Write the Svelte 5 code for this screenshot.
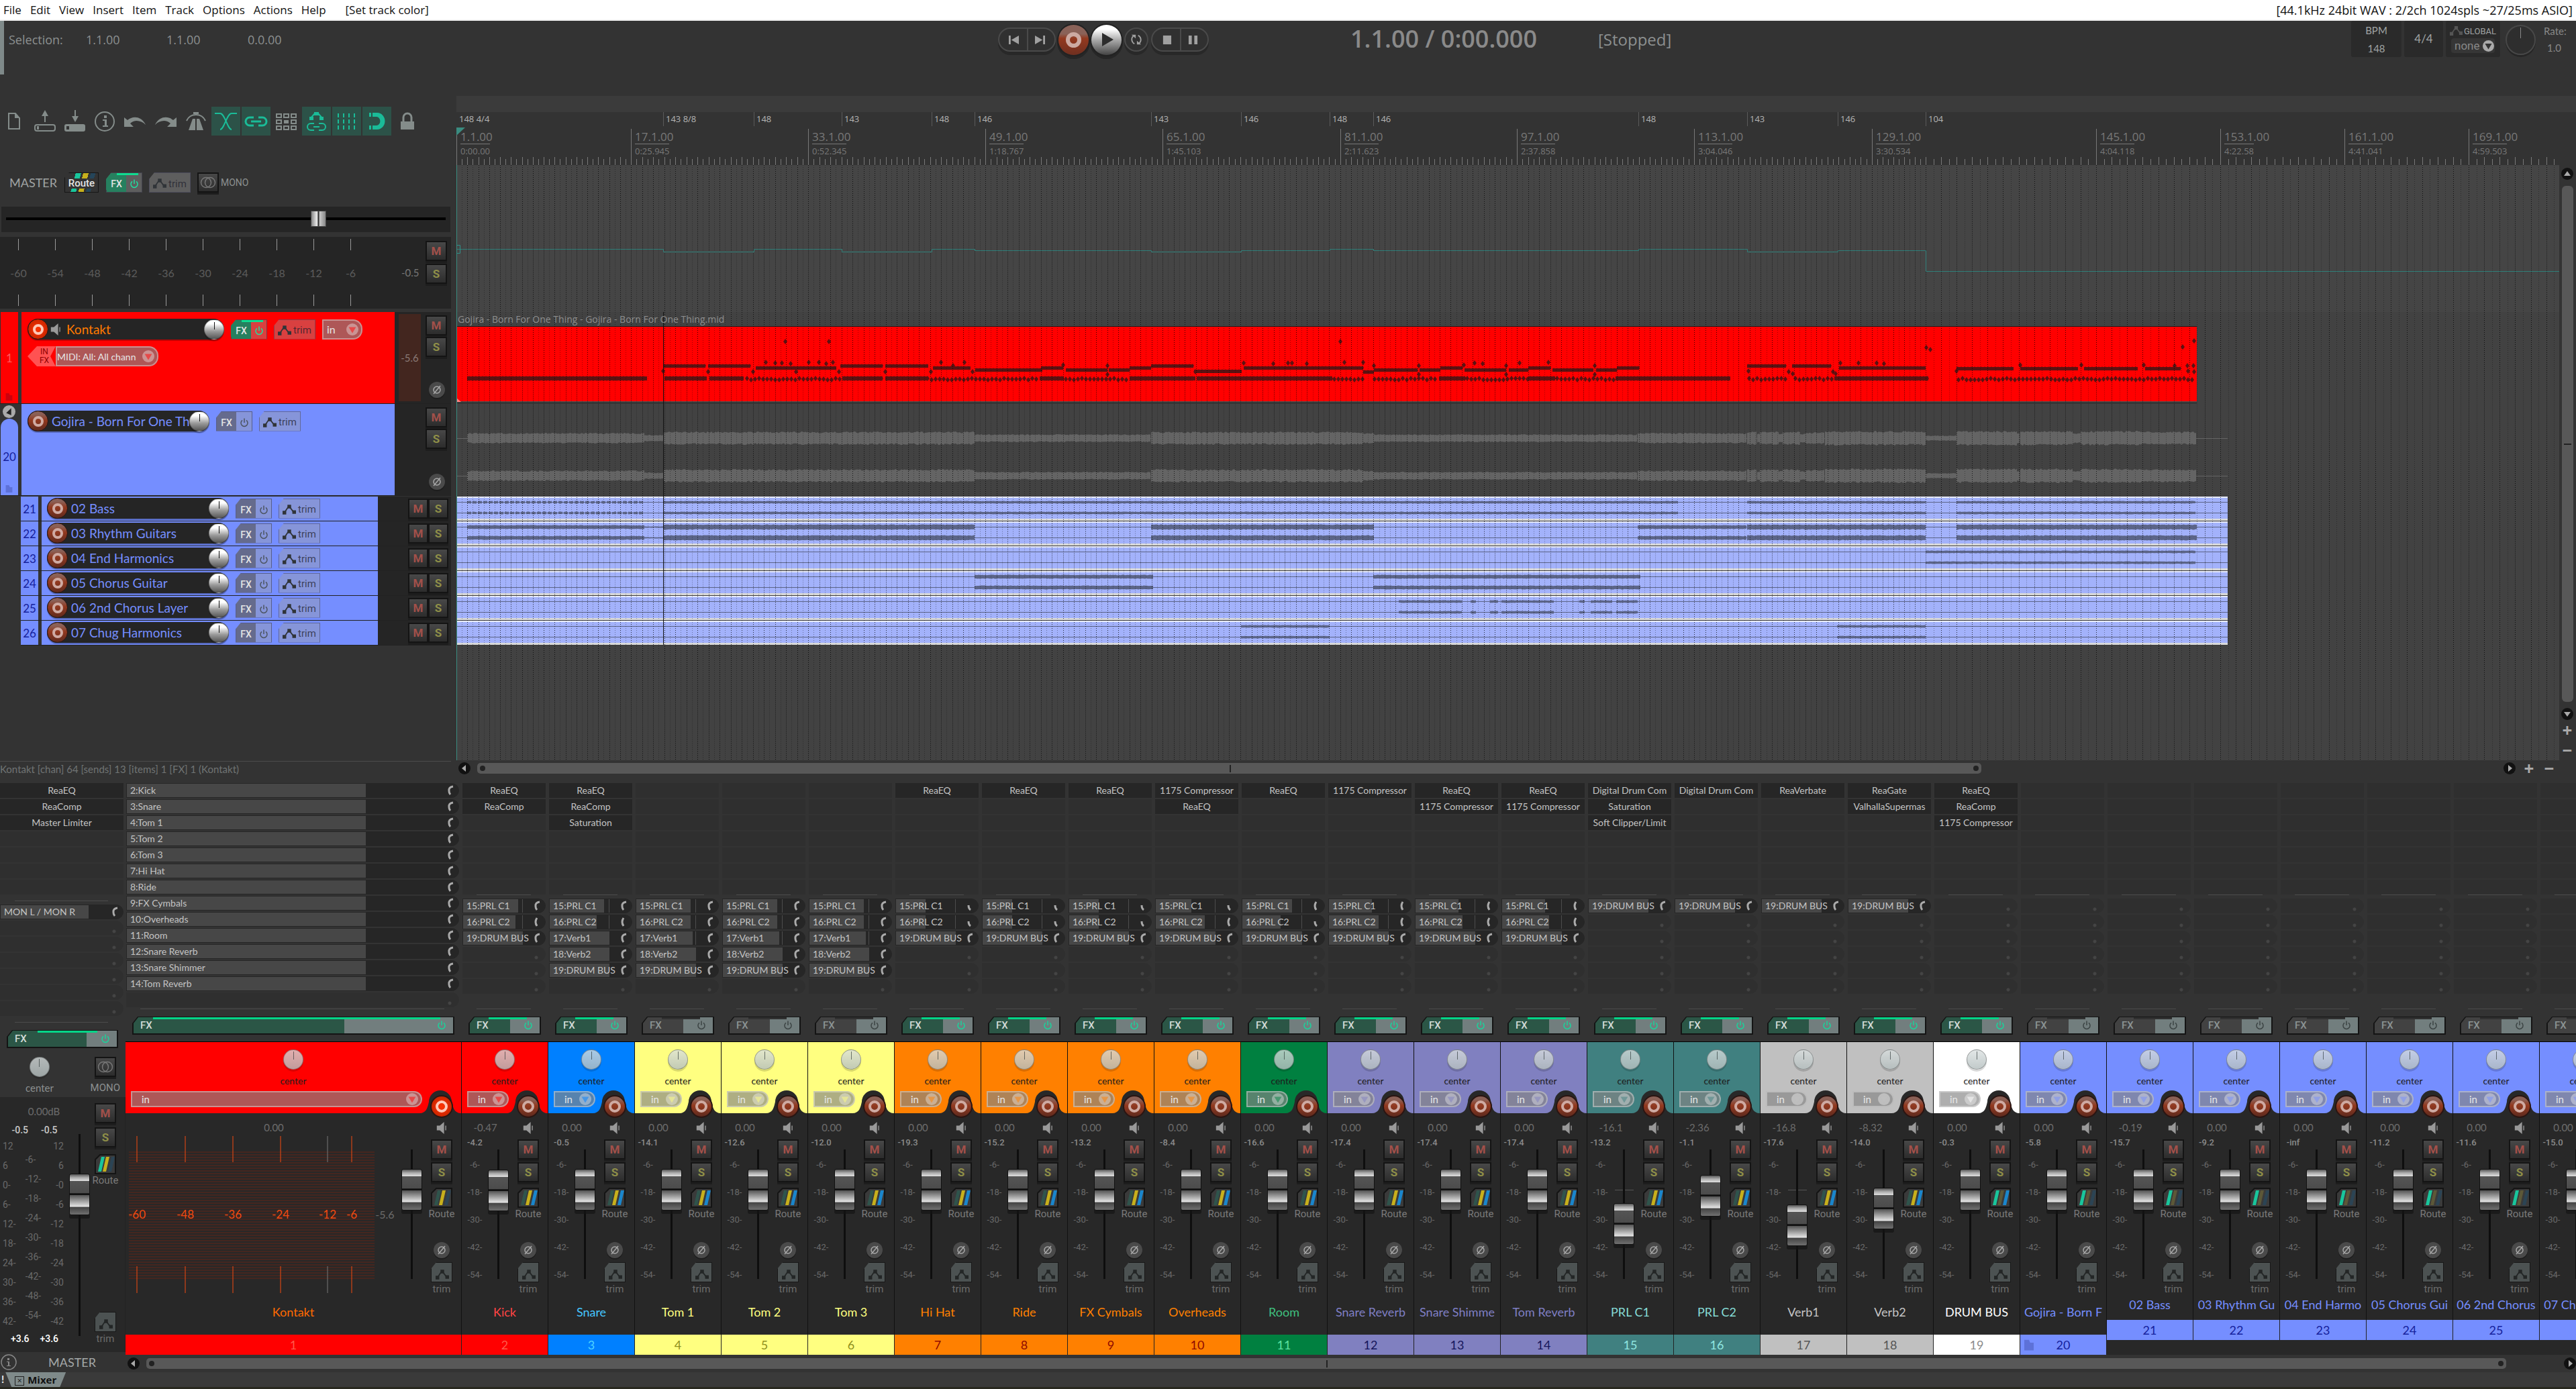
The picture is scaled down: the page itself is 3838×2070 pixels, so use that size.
<script>
	const menus = ['File', 'Edit', 'View', 'Insert', 'Item', 'Track', 'Options', 'Actions', 'Help'];

	// timeline is measured in project pixels, 3133 wide
	const TW = 3133;
	const TH = 887;

	const bars = [
		[1, 0, '1.1.00', '0:00.00'],
		[17, 260, '17.1.00', '0:25.945'],
		[33, 524, '33.1.00', '0:52.345'],
		[49, 788, '49.1.00', '1:18.767'],
		[65, 1052, '65.1.00', '1:45.103'],
		[81, 1317, '81.1.00', '2:11.623'],
		[97, 1580, '97.1.00', '2:37.858'],
		[113, 1844, '113.1.00', '3:04.046'],
		[129, 2109, '129.1.00', '3:30.534'],
		[134, 2189, '', ''],
		[145, 2443, '145.1.00', '4:04.118'],
		[153, 2628, '153.1.00', '4:22.58'],
		[161, 2813, '161.1.00', '4:41.041'],
		[169, 2998, '169.1.00', '4:59.503'],
		[177, 3183, '', '']
	];

	const tempos = [
		[0, '148 4/4', 148], [308, '143 8/8', 143], [443, '148', 148], [574, '143', 143],
		[708, '148', 148], [772, '146', 146], [1035, '143', 143], [1169, '146', 146],
		[1301, '148', 148], [1366, '146', 146], [1761, '148', 148], [1923, '143', 143],
		[2058, '146', 146], [2189, '104', 104]
	];

	function makeTicks() {
		const out = [];
		for (let i = 0; i < bars.length - 1; i++) {
			const [b0, x0] = bars[i];
			const [b1, x1] = bars[i + 1];
			const n = (b1 - b0) * 2;
			for (let k = 0; k < n; k++) {
				out.push({ x: Math.round(x0 + ((x1 - x0) * k) / n) + 0.5, whole: k % 2 === 0 });
			}
		}
		return out.filter((t) => t.x < TW);
	}
	const ticks = makeTicks();
	const path = (list, y0, y1) => list.map((t) => `M${t.x} ${y0}V${y1}`).join('');
	const wholeTicks = ticks.filter((t) => t.whole);
	const halfTicks = ticks.filter((t) => !t.whole);

	const tempoY = (bpm) => Math.round(125 + (148 - bpm) * 0.75) + 0.5;
	const tempoLine =
		tempos.map(([x, , bpm], i) => `${i ? 'H' + (x + 0.5) + 'V' : 'M0 '}${tempoY(bpm)}`).join('') + 'H' + TW;

	let seed = 7;
	function rnd() {
		seed = (seed * 16807) % 2147483647;
		return seed / 2147483647;
	}

	const diamond = (x, y, w, h) => `M${x - w} ${y}l${w} ${-h}l${w} ${h}l${-w} ${h}z`;

	const upper = [
		[308, 371, 299], [375, 438, 299], [446, 566, 302], [572, 635, 299], [639, 703, 299],
		[710, 766, 302], [773, 873, 305], [871, 904, 302], [908, 970, 305], [972, 1003, 305],
		[1003, 1035, 302], [1035, 1098, 299], [1099, 1170, 307], [1173, 1351, 302], [1351, 1367, 308],
		[1367, 1432, 305], [1435, 1466, 305], [1466, 1499, 302], [1502, 1564, 305], [1568, 1597, 305],
		[1597, 1630, 302], [1633, 1694, 305], [1698, 1729, 305], [1729, 1762, 302], [1923, 1981, 299],
		[1990, 2048, 299], [2060, 2189, 302], [2235, 2320, 303], [2330, 2416, 303], [2425, 2505, 303],
		[2516, 2569, 303]
	];
	const lower = [
		[16, 284, 1], [310, 373, 1], [377, 428, 1], [430, 574, 0], [575, 635, 1], [639, 703, 1],
		[705, 869, 0], [869, 905, 1], [905, 1003, 0], [1003, 1101, 1], [1103, 1170, 1], [1170, 1305, 1],
		[1305, 1351, 0], [1365, 1464, 0], [1464, 1503, 1], [1503, 1597, 0], [1597, 1637, 1],
		[1637, 1727, 0], [1727, 1898, 1], [1923, 1981, 0], [1992, 2050, 0], [2053, 2193, 1], [2235, 2592, 0]
	];
	const dots = [
		[490, 263], [555, 263], [442, 308], [461, 294], [475, 295], [485, 295], [498, 296], [525, 294],
		[540, 294], [561, 294], [551, 296], [506, 308], [375, 308], [308, 307], [570, 308], [639, 308],
		[707, 308], [722, 294], [740, 299], [757, 294], [769, 308], [904, 298], [970, 299], [970, 312],
		[1101, 308], [1173, 295], [1217, 296], [1239, 295], [1245, 295], [1267, 296], [1317, 263],
		[1323, 294], [1351, 294], [1367, 299], [1434, 299], [1434, 312], [1501, 298], [1517, 295],
		[1529, 296], [1564, 299], [1564, 312], [1584, 295], [1627, 294], [1696, 299], [1696, 312],
		[1925, 307], [1985, 308], [1991, 311], [2051, 308], [2055, 311], [2062, 295], [2089, 295],
		[2116, 295], [2127, 296], [2190, 272], [2196, 275], [2235, 307], [2330, 298], [2421, 298],
		[2514, 298], [2560, 299], [2572, 271], [2589, 262], [2579, 299], [2588, 299], [2580, 307], [2589, 308]
	];

	function midiPath() {
		let d = '';
		for (const [a, b, y] of upper) {
			d += `M${a} ${y - 2}H${b}v5H${a}z`;
			for (let x = a + 2; x < b; x += 5) d += diamond(x, y, 2, 3);
		}
		for (const [a, b, dense] of lower) {
			if (dense) d += `M${a} 315H${b}v6H${a}z`;
			for (let x = a + 3; x < b; x += dense ? 5 : 6) {
				d += diamond(x, dense ? 318 : 318 + Math.round(rnd() * 2), 3, 4);
			}
		}
		for (const [x, y] of dots) d += diamond(x, y, 3, 4);
		return d;
	}
	const midi = midiPath();

	// [from, to, half height]
	function wave(segs, cy, step = 2) {
		let d = '';
		for (const [a, b, amp] of segs) {
			let top = `M${a} ${cy}`;
			let bottom = '';
			for (let x = a; x <= b; x += step) {
				const u = amp - rnd() * amp * 0.25;
				const l = amp - rnd() * amp * 0.25;
				top += `L${x} ${(cy - u).toFixed(1)}`;
				bottom = `L${x} ${(cy + l).toFixed(1)}` + bottom;
			}
			d += top + bottom + 'Z';
		}
		return d;
	}
	const mixSegs = [
		[16, 280, 8], [280, 308, 5], [308, 772, 10], [772, 1035, 6], [1035, 1351, 10], [1351, 1367, 8],
		[1367, 1760, 6], [1760, 1923, 8], [1923, 1938, 10], [1938, 1942, 7], [1942, 1970, 10], [1970, 1976, 7],
		[1976, 2002, 10], [2002, 2010, 7], [2010, 2039, 9], [2039, 2189, 11], [2189, 2235, 4], [2235, 2325, 11],
		[2325, 2330, 8], [2330, 2408, 11], [2408, 2420, 8], [2420, 2510, 11], [2510, 2593, 10]
	];
	const mixL = wave(mixSegs, 407);
	const mixR = wave(mixSegs, 463);

	const bassIntro = Array.from({ length: 33 }, (_, i) => [16 + i * 8, 22 + i * 8, 2]);
	const stems = [
		{ no: 21, name: '02 Bass', segs: [...bassIntro, [308, 1821, 2], [1923, 2189, 2], [2235, 2591, 2]] },
		{ no: 22, name: '03 Rhythm Guitars', segs: [[16, 280, 3], [280, 308, 1], [308, 772, 4], [1035, 1367, 4], [1760, 1923, 3], [1923, 2189, 4], [2235, 2593, 4]] },
		{ no: 23, name: '04 End Harmonics', segs: [[2189, 2591, 2]] },
		{ no: 24, name: '05 Chorus Guitar', segs: [[772, 1039, 3], [1366, 1764, 3]] },
		{ no: 25, name: '06 2nd Chorus Layer', segs: [[1404, 1498, 2], [1511, 1520, 2], [1540, 1552, 2], [1557, 1636, 2], [1673, 1682, 2], [1690, 1723, 2], [1728, 1760, 2]] },
		{ no: 26, name: '07 Chug Harmonics', segs: [[1169, 1302, 2], [2057, 2190, 2]] }
	].map((s, i) => {
		const y = 494 + i * 37;
		return { ...s, y, d: wave(s.segs, y + 8.5) + wave(s.segs, y + 24.5) };
	});

	const tools = ['new', 'open', 'save', 'info', 'undo', 'redo', 'metronome', 'crossfade', 'link', 'group', 'envlink', 'grid', 'snap', 'lock'];
	const activeTools = ['crossfade', 'link', 'envlink', 'grid', 'snap'];

	const s = (label, fill = 89) => ({ label, fill });
	const drum = () => s('19:DRUM BUS');
	const tomSends = () => [s('15:PRL C1', 81), s('16:PRL C2', 81), s('17:Verb1', 84), s('18:Verb2'), drum()];
	const pair = (a, b) => [s('15:PRL C1', a), s('16:PRL C2', b), drum()];
	const C = {
		red: ['#ff0000', '#ff4444', '#ff5a4a'],
		blue: ['#0080ff', '#45c6ff', '#4fd2ff'],
		yellow: ['#ffff80', '#ffff80', '#8f8f1c'],
		orange: ['#ff8000', '#ff8000', '#8f0a00'],
		green: ['#008040', '#3fc07f', '#5fe0a0'],
		violet: ['#8080c0', '#7f7fc4', '#16165c'],
		teal: ['#408080', '#86dcd6', '#90e6e0'],
		grey: ['#c0c0c0', '#c4c4c4', '#555555'],
		white: ['#ffffff', '#ffffff', '#8c8c8c'],
		peri: ['#758eff', '#758eff', '#15229c']
	};
	const strips = [
		{ no: 2, name: 'Kick', c: C.red, fx: ['ReaEQ', 'ReaComp'], sends: pair(82, 78), vol: '-0.47', peak: '-4.2', top: 30 },
		{ no: 3, name: 'Snare', c: C.blue, fx: ['ReaEQ', 'ReaComp', 'Saturation'], sends: [s('15:PRL C1', 81), s('16:PRL C2', 70), s('17:Verb1'), s('18:Verb2'), drum()], peak: '-0.5' },
		{ no: 4, name: 'Tom 1', c: C.yellow, sends: tomSends(), peak: '-14.1' },
		{ no: 5, name: 'Tom 2', c: C.yellow, sends: tomSends(), peak: '-12.6' },
		{ no: 6, name: 'Tom 3', c: C.yellow, sends: tomSends(), peak: '-12.0' },
		{ no: 7, name: 'Hi Hat', c: C.orange, fx: ['ReaEQ'], sends: pair(44, 44), peak: '-19.3' },
		{ no: 8, name: 'Ride', c: C.orange, fx: ['ReaEQ'], sends: pair(44, 44), peak: '-15.2' },
		{ no: 9, name: 'FX Cymbals', c: C.orange, fx: ['ReaEQ'], sends: pair(44, 44), peak: '-13.2' },
		{ no: 10, name: 'Overheads', c: C.orange, fx: ['1175 Compressor', 'ReaEQ'], sends: pair(53, 73), peak: '-8.4' },
		{ no: 11, name: 'Room', c: C.green, fx: ['ReaEQ'], sends: pair(74, 57), peak: '-16.6' },
		{ no: 12, name: 'Snare Reverb', c: C.violet, fx: ['1175 Compressor'], sends: pair(64, 74), peak: '-17.4' },
		{ no: 13, name: 'Snare Shimme', c: C.violet, fx: ['ReaEQ', '1175 Compressor'], sends: pair(64, 70), peak: '-17.4' },
		{ no: 14, name: 'Tom Reverb', c: C.violet, fx: ['ReaEQ', '1175 Compressor'], sends: pair(64, 70), peak: '-17.4' },
		{ no: 15, name: 'PRL C1', c: C.teal, fx: ['Digital Drum Com', 'Saturation', 'Soft Clipper/Limit'], sends: [drum()], vol: '-16.1', peak: '-13.2', top: 80 },
		{ no: 16, name: 'PRL C2', c: C.teal, fx: ['Digital Drum Com'], sends: [drum()], vol: '-2.36', peak: '-1.1', top: 38 },
		{ no: 17, name: 'Verb1', c: C.grey, fx: ['ReaVerbate'], sends: [drum()], vol: '-16.8', peak: '-17.6', top: 82 },
		{ no: 18, name: 'Verb2', c: C.grey, fx: ['ReaGate', 'ValhallaSupermas'], sends: [drum()], vol: '-8.32', peak: '-14.0', top: 57 },
		{ no: 19, name: 'DRUM BUS', c: C.white, fx: ['ReaEQ', 'ReaComp', '1175 Compressor'], peak: '-0.3', route: [1, 0, 1] },
		{ no: 20, name: 'Gojira - Born F', c: C.peri, peak: '-5.8', route: [1, 0, 0], folder: true },
		{ no: 21, name: '02 Bass', c: C.peri, vol: '-0.19', peak: '-15.7', route: [1, 0, 0], child: true },
		{ no: 22, name: '03 Rhythm Gu', c: C.peri, peak: '-9.2', route: [1, 0, 0], child: true },
		{ no: 23, name: '04 End Harmo', c: C.peri, peak: '-inf', route: [1, 0, 0], child: true },
		{ no: 24, name: '05 Chorus Gui', c: C.peri, peak: '-11.2', route: [1, 0, 0], child: true },
		{ no: 25, name: '06 2nd Chorus', c: C.peri, peak: '-11.6', route: [1, 0, 0], child: true },
		{ no: 26, name: '07 Chug Harm', c: C.peri, peak: '-15.0', route: [1, 0, 0], child: true }
	];
	const kontakt = {
		no: 1, name: 'Kontakt', c: ['#ff0000', '#ff6a00', '#ff5a4a'], route: [0, 1, 0], wide: true, fx: [' '],
		sends: ['2:Kick', '3:Snare', '4:Tom 1', '5:Tom 2', '6:Tom 3', '7:Hi Hat', '8:Ride', '9:FX Cymbals', '10:Overheads', '11:Room', '12:Snare Reverb', '13:Snare Shimmer', '14:Tom Reverb'].map((l) => s(l, 356))
	};
	const wideScale = [[17, '-60'], [89, '-48'], [160, '-36'], [231, '-24'], [301, '-12'], [337, '-6']];
	const masterScale = ['12', '6', '0', '6', '12', '18', '24', '30', '36', '42'];
	const pad = (list, n) => [...(list ?? []), ...Array(Math.max(0, n - (list ?? []).length)).fill(null)];
</script>

{#snippet envIcon()}
	<svg class="env" viewBox="0 0 22 16"><path d="M3 13L9 4H12L18 12" /><path class="node" d="M0 10h6v6H0zM8 0h6v6H8zM16 9h6v6h-6z" /></svg>
{/snippet}

{#snippet power()}
	<svg class="power" viewBox="0 0 14 14"><path d="M4 3.4A5 5 0 1 0 10 3.4M7 0.5V7" /></svg>
{/snippet}

{#snippet rec(armed)}
	<button class="rec" class:armed aria-label="Record arm"><i></i></button>
{/snippet}

{#snippet ms(cls, text)}
	<button class="sq {cls}" aria-label={cls}>{text}</button>
{/snippet}

{#snippet phase()}
	<button class="phase" aria-label="Phase">
		<svg viewBox="0 0 24 24"><circle cx="12" cy="12" r="5" /><path d="M7 18L17 6" /></svg>
	</button>
{/snippet}

{#snippet speaker()}
	<svg class="speaker" viewBox="0 0 16 20"><path d="M0 6h5l7-6v20l-7-6H0z" /><path d="M14 6h1.500v8H14z" /></svg>
{/snippet}

{#snippet mono()}
	<button class="sq" aria-label="Mono">
		<svg class="rings" viewBox="0 0 24 18"><circle cx="9" cy="9" r="7.500" /><circle cx="15" cy="9" r="7.500" /></svg>
	</button>
{/snippet}

{#snippet tcpFx(on)}
	<button class="tfx" class:on aria-label="FX"><b>FX</b><span>{@render power()}</span></button>
{/snippet}

{#snippet tcpTrim()}
	<button class="ttrim">{@render envIcon()}trim</button>
{/snippet}

{#snippet dropArrow()}
	<svg class="drop" viewBox="0 0 20 20"><circle cx="10" cy="10" r="10" /><path d="M4 6h12L10 16z" /></svg>
{/snippet}

{#snippet routeIcon(on)}
	<svg class="route" viewBox="0 0 32 30">
		<path class="edge" d="M8 1H31V29H1V8z" />
		<path d="M10 4h5l-5 22H5z" fill={on[0] ? '#19c69c' : '#2f544c'} />
		<path d="M17 4h5l-5 22h-5z" fill={on[1] ? '#c7b01c' : '#5c5838'} />
		<path d="M25 4h5l-5 22h-5z" fill={on[2] ? '#1a86cc' : '#2b4454'} />
	</svg>
{/snippet}

{#snippet fxButton(on)}
	<button class="fxbtn" class:on><span><b>FX</b><em>{@render power()}</em></span></button>
{/snippet}

{#snippet sendRow(send)}
	{#if send}
		<div class="send">
			<div class="fill" style="width: {send.fill}px"></div>
			{#if send.fill < 89}<u></u>{/if}
			<span>{send.label}</span>
			<svg viewBox="0 0 12 16"><path d={send.fill < 60 ? 'M4 7Q4 12 7 14' : send.fill < 80 ? 'M6 2Q2 8 6 14' : 'M10 2Q3 3 4 9Q4 12 6 14'} /></svg>
		</div>
	{:else}
		<div class="send none"></div>
	{/if}
{/snippet}

{#snippet fader(value, max, label)}
	<input class="fader" type="range" min="0" {max} {value} aria-label={label} />
{/snippet}

{#snippet strip(t)}
	<section class="strip" class:wide={t.wide} class:child={t.child} style="--c: {t.c[0]}; --n: {t.c[1]}; --d: {t.c[2]}">
		<div class="inserts">
			{#if t.wide}
				{#each pad(t.sends, 14) as send}{@render sendRow(send)}{/each}
			{:else}
				{#each pad(t.fx, 7) as fx}<div class="insert" class:used={fx}>{fx ?? ''}</div>{/each}
				<hr class="first" />
				{#each pad(t.sends, 6) as send}{@render sendRow(send)}{/each}
			{/if}
		</div>
		<hr />
		{@render fxButton(!!t.fx)}
		<div class="head">
			<button class="knob" aria-label="Pan"></button>
			<div class="pan">center</div>
			<label class="in"><select aria-label="Input"><option>in</option></select>{@render dropArrow()}</label>
			<svg class="notch" viewBox="0 0 62 36"><path d="M0 36C10 36 12 28 14 19A17 17 0 0 1 48 19C50 28 52 36 62 36z" /></svg>
			{@render rec(t.no === 1)}
		</div>
		<div class="body">
			<div class="left">
				<div class="vol">{t.vol ?? '0.00'}</div>
				<div class="lanes">
					{#if t.wide}
						<div class="hmeter">
							<svg viewBox="0 0 411 234" preserveAspectRatio="none">
								{#each Array(48) as _, i}<path d="M5 {24 + i * 4}H371" stroke="#45261f" stroke-width="2" />{/each}
								{#each wideScale as [x]}<path d="M{x} 0V39M{x} 194V234" stroke={x === 301 ? '#777' : '#f24a10'} />{/each}
							</svg>
							{#each wideScale as [x, label]}<span style="left: {(x / 411) * 100}%">{label}</span>{/each}
							<span class="clip">-5.6</span>
						</div>
					{:else}
						<div class="scale">
							<b>{t.peak}</b>
							{#each ['-6-', '-18-', '-30-', '-42-', '-54-'] as l}<span>{l}</span>{/each}
						</div>
					{/if}
					{@render fader(131 - (t.top ?? 29), 131, t.name + ' volume')}
				</div>
			</div>
			<div class="right">
				{@render speaker()}
				{@render ms('mute', 'M')}
				{@render ms('solo', 'S')}
				<button class="routebtn">{@render routeIcon(t.route ?? [0, 1, 1])}Route</button>
				{@render phase()}
				<button class="trimbtn"><i>{@render envIcon()}</i>trim</button>
			</div>
		</div>
		<div class="name"><span>{t.name}</span></div>
		<div class="num">
			{#if t.folder}<svg viewBox="0 0 16 18"><path d="M0 0h8l2 5h6v13H0z" /></svg>{/if}
			{t.no}
		</div>
	</section>
{/snippet}

{#snippet side(big)}
	<div class="side" class:big>
		<div class="sqs">{@render ms('mute', 'M')}{@render ms('solo', 'S')}</div>
		{#if big}{@render phase()}{/if}
	</div>
{/snippet}

{#snippet hscroll(mark)}
	<button class="arrow" aria-label="Scroll left"><svg viewBox="0 0 18 18"><path d="M11 4v10L5 9z" /></svg></button>
	<div class="bar"><i></i><u style="left: {mark}%"></u><i></i></div>
{/snippet}

<nav class="menubar">
	{#each menus as m}<button>{m}</button>{/each}
	<button class="last">[Set track color]</button>
	<span>[44.1kHz 24bit WAV : 2/2ch 1024spls ~27/25ms ASIO]</span>
</nav>

<header class="transport">
	<div class="selection"><span>Selection:</span><span>1.1.00</span><span>1.1.00</span><span>0.0.00</span></div>
	<div class="buttons">
		<div class="pill">
			<button aria-label="Start"><svg viewBox="0 0 18 16"><path d="M1 1h3v14H1zM17 1v14L5 8z" /></svg></button>
			<button aria-label="End"><svg viewBox="0 0 18 16"><path d="M14 1h3v14h-3zM1 1v14L13 8z" /></svg></button>
		</div>
		<button class="round record" aria-label="Record"><i></i></button>
		<button class="round play" aria-label="Play"><svg viewBox="0 0 20 20"><path d="M3 0L20 10 3 20z" /></svg></button>
		<button class="round repeat" aria-label="Repeat">
			<svg viewBox="0 0 20 20"><path d="M7 17A8 8 0 0 1 5 4M13 3A8 8 0 0 1 15 16" /><path class="f" d="M2 2h7v6zM18 18h-7v-6z" /></svg>
		</button>
		<div class="pill">
			<button aria-label="Stop"><svg viewBox="0 0 18 16"><path d="M3 1h13v14H3z" /></svg></button>
			<button aria-label="Pause"><svg viewBox="0 0 18 16"><path d="M2 1h5v14H2zM11 1h5v14h-5z" /></svg></button>
		</div>
	</div>
	<div class="time">1.1.00 / 0:00.000</div>
	<div class="state">[Stopped]</div>
	<div class="status">
		<div class="cell bpm"><span>BPM</span><span>148</span></div>
		<div class="cell sig">4/4</div>
		<div class="cell global">
			<span>{@render envIcon()}GLOBAL</span>
			<label><select aria-label="Global automation"><option>none</option></select>{@render dropArrow()}</label>
		</div>
		<button class="rateknob" aria-label="Rate"></button>
		<div class="rate"><span>Rate:</span><span>1.0</span></div>
	</div>
</header>

<main class="workspace">
	<div class="tcp">
		<div class="toolbar">
			{#each tools as tool}
				<button class:active={activeTools.includes(tool)} aria-label={tool}>
					<svg viewBox="0 0 43 43">
						{#if tool === 'new'}
							<path d="M13 10h10l6 7v16H13z" /><path class="f" d="M22 9l8 8h-8z" />
						{:else if tool === 'open'}
							<rect x="7" y="27" width="30" height="9" rx="3" /><path d="M22 23V10" /><path class="f" d="M17 14l5-9 5 9zM10 29h3v5h-3z" />
						{:else if tool === 'save'}
							<rect class="f" x="6" y="26" width="31" height="11" rx="3" /><path d="M22 5V18" /><path class="f" d="M17 14l5 9 5-9z" /><path class="hole" d="M9 29h4v5H9z" />
						{:else if tool === 'info'}
							<circle cx="21" cy="22" r="14" /><path class="f" d="M20 13h4v4h-4zM18 19h6v9h2v2h-8v-2h3v-7h-3z" />
						{:else if tool === 'undo'}
							<path class="f" d="M5 16v14h14l-5-5C20 19 30 20 37 27 30 13 17 14 10 20z" />
						{:else if tool === 'redo'}
							<path class="f" d="M38 16v14H24l5-5C23 19 13 20 6 27 13 13 26 14 33 20z" />
						{:else if tool === 'metronome'}
							<path class="f" d="M17 18h10l6 17H11zM18 8h8v3h-8z" /><path d="M8 21Q12 12 22 12Q32 12 36 21" /><path class="cut" d="M22 18V35" />
						{:else if tool === 'crossfade'}
							<path d="M5 10H13C20 10 24 34 30 34M38 10H30C23 10 19 34 13 34" />
						{:else if tool === 'link'}
							<path class="m" d="M18 16H12A6 6 0 0 0 12 28H18M25 16H31A6 6 0 0 1 31 28H25M14 22H29" />
						{:else if tool === 'group'}
							{#each [0, 1, 2] as r}{#each [0, 1, 2] as c}
								<rect class:f={r === 1 && c === 1} x={7 + c * 11} y={11 + r * 9} width="7" height="5" />
							{/each}{/each}
						{:else if tool === 'envlink'}
							<path d="M12 18L19 10H24L31 18" /><path class="f" d="M11 15h6v5h-6zM18 8h7v5h-7zM26 15h6v5h-6z" /><path d="M18 25H13A5 5 0 0 0 13 35H18M25 25H30A5 5 0 0 1 30 35H25M17 30H26" />
						{:else if tool === 'grid'}
							<path class="dash" d="M9 10V34M17 10V34M25 10V34M33 10V34" />
						{:else if tool === 'snap'}
							<path class="f" d="M15 9H22A11 12 0 0 1 22 34H15V28H21A5 6 0 0 0 21 15H15z" /><path class="f" d="M10 9h3v6h-3zM10 28h3v6h-3z" />
						{:else}
							<path class="f" d="M12 22h20v12H12z" /><path class="m" d="M16 22V16A6 6 0 0 1 28 16V22" />
						{/if}
					</svg>
				</button>
			{/each}
		</div>

		<div class="master-row">
			<span class="title">MASTER</span>
			<button class="rt">Route</button>
			{@render tcpFx(true)}
			{@render tcpTrim()}
			{@render mono()}<span class="mono">MONO</span>
		</div>
		<div class="mfader"><input type="range" min="0" max="631" value="453" aria-label="Master volume" /></div>
		<div class="mmeter">
			{#each ['-60', '-54', '-48', '-42', '-36', '-30', '-24', '-18', '-12', '-6'] as l}<div>{l}</div>{/each}
			<span>-0.5</span>
			<div class="sqs">{@render ms('mute', 'M')}{@render ms('solo', 'S')}</div>
		</div>

		<div class="track big" style="--c: #ff0000">
			<div class="no" style="color: #ff5a5a">1<svg viewBox="0 0 16 18"><path d="M0 0h8l2 5h6v13H0z" /></svg></div>
			<div class="panel">
				<div class="ctl">
					<div class="label wide">{@render rec(true)}{@render speaker()}<span style="color: #ff7a00">Kontakt</span><button class="knob metal" aria-label="Pan"></button></div>
					{@render tcpFx(true)}{@render tcpTrim()}
					<label class="in"><select aria-label="Input"><option>in</option></select>{@render dropArrow()}</label>
				</div>
				<div class="ctl midi">
					<button class="infx">IN<br />FX</button>
					<label class="in"><select aria-label="MIDI input"><option>MIDI: All: All chann</option></select>{@render dropArrow()}</label>
				</div>
			</div>
			<div class="peak">-5.6</div>
			{@render side(true)}
		</div>
		<div class="track big folder" style="--c: #758eff">
			<div class="no"><button aria-label="Collapse"><svg viewBox="0 0 18 18"><path d="M12 4v10L5 11z" /></svg></button><span>20</span><svg viewBox="0 0 16 18"><path d="M0 0h8l2 5h6v13H0z" /></svg></div>
			<div class="panel">
				<div class="ctl">
					<div class="label">{@render rec(false)}<span>Gojira - Born For One Th</span><button class="knob metal" aria-label="Pan"></button></div>
					{@render tcpFx(false)}{@render tcpTrim()}
				</div>
			</div>
			<div class="peak off"></div>
			{@render side(true)}
		</div>
		<div class="children">
			{#each stems as t}
				<div class="track" style="--c: #758eff">
					<div class="no">{t.no}</div>
					<div class="panel">
						<div class="ctl">
							<div class="label">{@render rec(false)}<span>{t.name}</span><button class="knob metal" aria-label="Pan"></button></div>
							{@render tcpFx(false)}{@render tcpTrim()}
						</div>
					</div>
					{@render side(false)}
				</div>
			{/each}
		</div>
		<div class="note">Kontakt [chan] 64 [sends] 13 [items] 1 [FX] 1 (Kontakt)</div>
	</div>

	<div class="arrange">
		<div class="band"></div>
		<div class="ruler">
			<svg viewBox="0 0 3158 79" preserveAspectRatio="none">
				<path d={path(wholeTicks, 67, 79)} /><path d={path(halfTicks, 70, 79)} />
				{#each bars as [, x, label]}{#if label}<path d="M{x + 0.5} 25V79" />{/if}{/each}
				{#each tempos.slice(1) as [x]}<path class="dim" d="M{x + 0.5} 0V21" />{/each}
				<path class="start" d="M0 23H13L0 35z" />
			</svg>
			{#each tempos as [x, label]}<span class="tempo" style="left: {(x / 3158) * 100}%">{label}</span>{/each}
			{#each bars as [, x, label, time]}
				{#if label}<div class="mark" style="left: {(x / 3158) * 100}%">{label}<small>{time}</small></div>{/if}
			{/each}
		</div>
		<div class="view">
			<div class="canvas">
				<svg viewBox="0 0 {TW} {TH}" preserveAspectRatio="none">
					<rect y="219" width={TW} height="668" fill="#424242" />
					<rect y="240" width="2593" height="115" fill="#1e1e1e" />
					<rect y="241" width="2593" height="111" fill="#ff0000" />
					<rect y="352" width="2593" height="2" fill="#4a4a4a" />
					<path d={midi} fill="#5c1212" />
					<path d="M0 347l7 6H0z" fill="#ff8080" />
					<path d="M0 407.500H2639M0 463.500H2639" stroke="#646464" />
					<path d={mixL} fill="#646464" /><path d={mixR} fill="#646464" />
					{#each stems as t}
						<rect y={t.y} width="2639" height="37" fill="#3a3a3a" />
						<rect y={t.y} width="2639" height="2" fill="#e8ecff" />
						<rect y={t.y + 2} width="2639" height="31" fill="#a3b2fb" />
						<rect y={t.y + 33} width="2639" height="3" fill="#d9d9d9" />
						<path d="M0 {t.y + 8.5}H2639M0 {t.y + 24.5}H2639" stroke="#5b6487" />
						<path d={t.d} fill="#5b6487" />
					{/each}
					<path class="g1" d={path(wholeTicks, 0, TH)} />
					<path class="g2" d={path(halfTicks, 0, TH)} />
					<path d={tempoLine} fill="none" stroke="#2f7f79" />
					<path d="M308.500 219V715" stroke="#111" />
					<path d="M0.500 0V887" stroke="#3a8c80" />
					<path d="M0 119.500H5.500V131.500H0" fill="none" stroke="#2f8f88" />
				</svg>
				<span class="itemname">Gojira - Born For One Thing - Gojira - Born For One Thing.mid</span>
			</div>
			<div class="vscroll">
				<button class="arrow" aria-label="Scroll up"><svg viewBox="0 0 18 18"><path d="M4 12h10L9 5z" /></svg></button>
				<div class="bar"></div>
				<button class="arrow" aria-label="Scroll down"><svg viewBox="0 0 18 18"><path d="M4 6h10l-5 7z" /></svg></button>
				<button class="zoom">+</button>
				<button class="zoom">−</button>
			</div>
		</div>
		<div class="hscroll">
			{@render hscroll(50)}
			<div class="rest"></div>
			<button class="arrow" aria-label="Scroll right"><svg viewBox="0 0 18 18"><path d="M7 4v10l6-5z" /></svg></button>
			<button class="zoom">+</button>
			<button class="zoom">−</button>
		</div>
	</div>
</main>

<div class="mixer">
	<section class="master">
		<div class="inserts">
			{#each pad(['ReaEQ', 'ReaComp', 'Master Limiter'], 7) as fx}<div class="insert" class:used={fx}>{fx ?? ''}</div>{/each}
			<hr class="first" />
			{#each pad([s('MON L / MON R', 131)], 7) as send}{@render sendRow(send)}{/each}
		</div>
		<hr />
		{@render fxButton(true)}
		<div class="mhead">
			<div><button class="knob" aria-label="Master pan"></button><span>center</span></div>
			<div>{@render mono()}<span>MONO</span></div>
		</div>
		<div class="mbody">
			<div class="mleft">
				<div class="vol">0.00dB</div>
				<div class="peaks"><b>-0.5</b><b>-0.5</b></div>
				<div class="cols">
					<div>{#each masterScale as l, i}<span>{l}{i > 1 ? '-' : ''}</span>{/each}</div>
					<div class="mid">{#each [6, 12, 18, 24, 30, 36, 42, 48, 54] as l}<span>-{l}-</span>{/each}</div>
					<div class="end">{#each masterScale as l, i}<span>{i > 1 ? '-' : ''}{l}</span>{/each}</div>
				</div>
				<div class="peaks low"><b>+3.6</b><b>+3.6</b></div>
			</div>
			{@render fader(180, 239, 'Master volume')}
			<div class="right">
				{@render ms('mute', 'M')}
				{@render ms('solo', 'S')}
				<button class="routebtn">{@render routeIcon([1, 1, 0])}Route</button>
				<button class="trimbtn"><i>{@render envIcon()}</i>trim</button>
			</div>
		</div>
		<div class="mfoot">
			<svg viewBox="0 0 24 24"><circle cx="12" cy="12" r="11" /><path d="M10 6h3v3h-3zM9 11h4v6h2v1H9v-1h2v-5H9z" /></svg>
			<span>MASTER</span>
		</div>
	</section>
	<div class="strips">
		<div class="row">
			{@render strip(kontakt)}
			{#each strips as t}{@render strip(t)}{/each}
		</div>
		<div class="hscroll">
			{@render hscroll(50)}
			<div class="rest"></div>
			<button class="arrow" aria-label="Scroll right"><svg viewBox="0 0 18 18"><path d="M7 4v10l6-5z" /></svg></button>
		</div>
	</div>
</div>
<footer><b>!</b><button class="tab"><i>×</i>Mixer</button></footer>

<style>
	:global(body) {
		background: #333333;
		font-family: Lato, "Open Sans", sans-serif;
		font-size: 15px;
		color: #8c9090;
		overflow: hidden;
	}
	:global(#app) { overflow: hidden; }
	button, select {
		font: inherit;
		color: inherit;
		background: none;
		border: none;
		padding: 0;
		margin: 0;
	}
	svg { display: block; }
	* { box-sizing: border-box; }

	.menubar {
		display: flex;
		align-items: center;
		height: 31px;
		gap: 13px;
		padding: 0 5px;
		background: #fff;
		border-bottom: 2px solid #f0f0f0;
		color: #111;
		font: 17px "Open Sans", sans-serif;
	}
	.menubar .last { margin-left: 16px; }
	.menubar span { margin-left: auto; font-size: 18px; }

	.transport {
		display: grid;
		grid-template-columns: 1487px 525px 369px 1fr auto;
		height: 112px;
		font-family: "Open Sans", sans-serif;
		border-left: 6px solid #7f8a8a;
		border-image: linear-gradient(#7f8a8a 0 80px, #333 80px) 1;
	}
	.selection {
		display: grid;
		grid-template-columns: 115px 120px 121px auto;
		justify-content: start;
		padding: 16px 0 0 7px;
		font-size: 18px;
		line-height: 24px;
	}
	.buttons {
		display: flex;
		align-items: center;
		gap: 4px;
		height: 56px;
		margin-left: -6px;
	}
	.pill {
		display: flex;
		height: 36px;
		border: 2px solid #4a4a4a;
		border-radius: 18px;
		background: #303030;
		box-shadow: 0 5px 0 #282828;
	}
	.pill button { width: 41px; padding-left: 13px; }
	.pill button + button { border-left: 2px solid #4a4a4a; padding-left: 9px; }
	.pill svg { width: 17px; height: 15px; fill: #a0a0a0; }
	.round {
		display: flex;
		align-items: center;
		justify-content: center;
		width: 45px;
		height: 45px;
		border-radius: 50%;
		box-shadow: 0 0 0 2px #222, 0 4px 0 2px #262626;
	}
	.record { background: linear-gradient(#8a6258 0 30%, #93391f 45%, #6e2f20); }
	.record i { width: 23px; height: 23px; border: 6px solid #ccaaa2; border-radius: 50%; }
	.play { background: linear-gradient(#fff 15%, #aaa 50%, #444); }
	.play svg { width: 20px; height: 20px; fill: #2c2c2c; }
	.repeat { width: 36px; height: 36px; background: #303030; box-shadow: inset 0 0 0 2px #4a4a4a, 0 5px 0 #282828; }
	.repeat svg { width: 18px; height: 18px; fill: none; stroke: #a0a0a0; stroke-width: 2; }
	.repeat .f { fill: #a0a0a0; stroke: none; }
	.time { font-size: 36px; font-weight: 600; line-height: 54px; margin-left: -6px; white-space: nowrap; color: #8a8a8a; }
	.state { font-size: 24px; line-height: 56px; margin-left: -6px; }
	.status { display: flex; gap: 4px; height: 54px; font: 15px Lato, sans-serif; color: #a0a4a4; }
	.cell { background: #2a2a2a; border-radius: 3px; text-align: center; }
	.bpm { width: 75px; display: flex; flex-direction: column; justify-content: space-around; }
	.sig { width: 58px; line-height: 54px; font-size: 17px; }
	.global { width: 81px; padding: 4px 6px; font: 13px Roboto, sans-serif; }
	.global > span { display: flex; align-items: center; gap: 2px; height: 22px; }
	.global .env { width: 20px; height: 14px; --e: #555; }
	.global label { display: flex; align-items: center; margin: 0 2px; background: #363636; border-radius: 4px; }
	.global select { appearance: none; width: 47px; height: 22px; padding-left: 5px; font-size: 17px; color: #888; }
	.global .drop { width: 17px; height: 17px; fill: #aaa; }
	.global .drop path { fill: #333; fill-opacity: 1; }
	.rateknob {
		width: 45px;
		height: 45px;
		margin: 6px 4px 0;
		border: 2px solid #484848;
		border-radius: 50%;
		background: linear-gradient(#888, #888) center 2px / 1px 16px no-repeat, #2e2e2e;
		box-shadow: 0 3px 0 #262626;
	}
	.rate { width: 52px; display: flex; flex-direction: column; align-items: flex-start; gap: 3px; padding: 4px 0 0 4px; font-size: 15px; line-height: 22px; color: #888; }
	.rate span:last-child { padding-left: 5px; }

	.workspace { display: grid; grid-template-columns: 680px 1fr; }
	.tcp { padding: 16px 8px 0 0; }
	.toolbar { display: flex; gap: 2px; }
	.toolbar button { width: 43px; height: 43px; --i: #848c8a; }
	.toolbar .active { background: #2c5248; --i: #1abc98; }
	.toolbar svg { width: 43px; height: 43px; fill: none; stroke: var(--i); stroke-width: 2; }
	.toolbar .f { fill: var(--i); stroke: none; }
	.toolbar .m { stroke-width: 3; }
	.toolbar .hole { fill: #333; stroke: none; }
	.toolbar .cut { stroke: #333; }
	.toolbar .dash { stroke-dasharray: 6 3; }

	.master-row { display: flex; align-items: center; height: 30px; margin-top: 55px; padding-left: 14px; }
	.title { width: 82px; font-size: 18px; color: #a0a4a4; }
	.rt {
		width: 51px;
		height: 30px;
		margin-right: 11px;
		border: 1px solid #161616;
		background:
			linear-gradient(#333, #333) 0 8px / 100% 15px no-repeat,
			linear-gradient(105deg, #333 28%, #19c69c 28% 42%, #333 42% 48%, #c7b01c 48% 62%, #333 62% 68%, #25455a 68% 80%, #333 80%);
		clip-path: polygon(7px 0, 100% 0, 100% 100%, 0 100%, 0 8px);
		color: #e4e4e4;
		font: 500 15px/30px Roboto, sans-serif;
	}
	.master-row .ttrim { margin: 0 10px; }
	.mono { margin-left: 3px; font: 14px Roboto, sans-serif; }
	.tfx {
		display: flex;
		width: 54px;
		height: 30px;
		border: 1px solid rgba(40, 40, 60, 0.5);
		background: rgba(160, 160, 160, 0.4);
		clip-path: polygon(8px 0, 100% 0, 100% 100%, 0 100%, 0 10px);
		color: #e4e4e4;
		font: 14px/32px Roboto, sans-serif;
	}
	.tfx b { width: 29px; height: 28px; background: rgba(80, 80, 90, 0.6); font-weight: 500; }
	.tfx span { flex: 1; padding: 9px 0 0 5px; }
	.tfx.on { background: linear-gradient(#0fdc90, #0fdc90) 15px 0 / 32px 3px no-repeat, rgba(160, 160, 160, 0.4); }
	.tfx.on b { margin-top: 3px; height: 25px; background: #26805f; line-height: 26px; box-shadow: -14px -3px 0 #26805f; }
	.power { width: 14px; height: 14px; fill: none; stroke: #4c5460; stroke-width: 1.500; }
	.on .power { stroke: #1fe0a0; }
	.ttrim {
		display: flex;
		align-items: center;
		gap: 3px;
		width: 62px;
		height: 30px;
		padding: 3px 0 0 5px;
		border: 1px solid rgba(60, 60, 90, 0.5);
		background: rgba(160, 160, 160, 0.4);
		clip-path: polygon(8px 0, 100% 0, 100% 100%, 0 100%, 0 10px);
		color: rgba(30, 30, 45, 0.75);
		font: 15px Roboto, sans-serif;
	}
	.env { width: 20px; height: 15px; fill: none; stroke: var(--e, #303438); stroke-width: 2; }
	.env .node { fill: var(--e, #303438); stroke: none; }

	.mfader { margin: 21px 1px 0 2px; padding: 0 7px; height: 38px; background: #252525; }
	.mfader input {
		appearance: none;
		width: 100%;
		height: 36px;
		margin: 0;
		background: linear-gradient(#000, #000) center / 100% 4px no-repeat;
	}
	.mfader input::-webkit-slider-thumb {
		appearance: none;
		width: 23px;
		height: 24px;
		border: 1px solid #444;
		background: linear-gradient(90deg, #888, #eee 40%, #333 48% 54%, #ccc 56%, #888);
	}
	.mmeter {
		display: grid;
		grid-template-columns: repeat(10, 55px) 1fr 38px;
		height: 107px;
		margin: 7px 0 5px;
		background: #252525;
		line-height: 107px;
		font-size: 16px;
		color: #5c5c5c;
	}
	.mmeter > div:not(.sqs) {
		text-align: center;
		background: linear-gradient(#999, #999) center 3px / 1px 17px no-repeat, linear-gradient(#999, #999) center 86px / 1px 17px no-repeat;
	}
	.mmeter > span { padding-left: 48px; font-size: 15px; color: #777; }
	.mmeter .sqs { margin-top: 6px; gap: 4px; }
	.sqs { display: flex; flex-direction: column; gap: 2px; }
	.sq {
		display: flex;
		align-items: center;
		justify-content: center;
		width: 32px;
		height: 30px;
		border: 2px solid #141414;
		background: linear-gradient(#484848, #2c2c2c);
		box-shadow: 0 3px 0 #1d1d1d;
		font: bold 17px Roboto, sans-serif;
	}
	.mute { color: #a2504a; }
	.solo { color: #8f8f48; }
	.rings { width: 24px; height: 18px; fill: none; stroke: #777; stroke-width: 1.500; }

	.track { display: flex; height: 37px; border-bottom: 1px solid #222; }
	.track.big { height: 137px; padding-left: 1px; }
	.children { margin: 1px 0 0 31px; }
	.no {
		position: relative;
		display: flex;
		align-items: center;
		justify-content: center;
		width: 26px;
		margin-right: 5px;
		background: var(--c);
		font-size: 17px;
		color: #15229c;
	}
	.big .no > svg { position: absolute; bottom: 4px; left: 6px; width: 13px; height: 11px; fill: rgba(0, 0, 60, 0.2); }
	.folder .no { background: none; align-items: stretch; padding-top: 22px; }
	.folder .no span { flex: 1; background: var(--c); border-radius: 13px 13px 0 0; line-height: 114px; text-align: center; }
	.folder .no button { position: absolute; top: 2px; left: 3px; width: 19px; height: 19px; border-radius: 50%; background: #aaa; }
	.folder .no button svg { fill: #222; }
	.panel { flex: 1; padding: 10px 0 0 9px; background: var(--c); }
	.children .panel { padding: 2px 0 0 8px; }
	.ctl { display: flex; align-items: center; gap: 10px; }
	.label {
		display: flex;
		align-items: center;
		width: 271px;
		height: 31px;
		background: #252525;
		border-radius: 16px;
		box-shadow: 0 2px 0 rgba(0, 0, 0, 0.25);
		font-size: 19px;
		color: #758eff;
	}
	.label.wide { width: 293px; }
	.label span { flex: 1; margin-left: 5px; overflow: hidden; white-space: nowrap; }
	.label .speaker { margin: 0 3px; }
	.rec {
		display: flex;
		align-items: center;
		justify-content: center;
		flex: none;
		width: 31px;
		height: 31px;
		border: 1px solid #2a1512;
		border-radius: 50%;
		background: linear-gradient(#8a6056 15%, #93391f 45%, #5e2a1e);
	}
	.rec i { width: 16px; height: 16px; border: 4px solid #cfaaa2; border-radius: 50%; }
	.rec.armed { background: radial-gradient(#ff3300, #b82000); }
	.rec.armed i { border-color: #ffc8b8; }
	.speaker { width: 16px; height: 18px; fill: #999; }
	.knob {
		flex: none;
		width: 30px;
		height: 30px;
		border-radius: 50%;
		border: 1px solid rgba(0, 0, 0, 0.3);
		background: linear-gradient(rgba(30, 40, 40, 0.6), rgba(30, 40, 40, 0.6)) center 2px / 1px 12px no-repeat, linear-gradient(rgba(218, 224, 224, 0.78), rgba(180, 190, 190, 0.82));
		box-shadow: 0 3px 0 rgba(0, 0, 0, 0.15);
	}
	.knob.metal { background: linear-gradient(#111, #111) center 3px / 1px 11px no-repeat, linear-gradient(#fff 20%, #999 60%, #555); }
	.in {
		position: relative;
		display: flex;
		align-items: center;
		width: 60px;
		height: 30px;
		border: 2px solid rgba(255, 255, 255, 0.35);
		border-radius: 0 14px 14px 0;
		background: rgba(132, 132, 132, 0.66);
		color: #e6e6e6;
	}
	.in select { appearance: none; width: 100%; height: 100%; padding-left: 14px; font-size: 15px; }
	.drop { width: 18px; height: 18px; fill: rgba(255, 255, 255, 0.36); pointer-events: none; }
	.in .drop { position: absolute; right: 4px; }
	.drop path { fill: var(--c); fill-opacity: 0.5; }
	.ctl .in select { padding-left: 5px; font-size: 16px; }
	.midi { gap: 0; margin-top: 10px; }
	.midi .in { width: 153px; height: 30px; }
	.ctl.midi .in select { padding: 0 22px 0 0; font-size: 14px; }
	.infx {
		width: 42px;
		height: 30px;
		padding-left: 8px;
		background: #ff5252;
		clip-path: polygon(0 50%, 14px 0, 100% 0, 34px 50%, 100% 100%, 14px 100%);
		color: #8e0000;
		font: 12px/13px Roboto, sans-serif;
	}
	.side { display: flex; width: 109px; padding: 3px 0 0 45px; background: #252525; }
	.side .sqs { flex-direction: row; gap: 0; }
	.side .sq { width: 30px; }
	.side.big { flex-direction: column; width: 38px; padding: 5px 0 0 0; }
	.side.big .sqs { flex-direction: column; gap: 2px; }
	.side.big .sq { width: 32px; }
	.side.big .phase { margin: auto 0 8px 5px; }
	.phase { width: 24px; height: 24px; border-radius: 50%; background: #4a4a4a; box-shadow: 0 2px 0 #1d1d1d; }
	.phase svg { fill: none; stroke: #a8a8a8; stroke-width: 1.500; }
	.peak { width: 46px; border: solid #252525; border-width: 3px 7px 3px 6px; background: #43261f; color: #8a7a76; font-size: 15px; line-height: 130px; text-align: center; }
	.peak.off { background: #252525; }
	.note { margin-top: 172px; border-top: 1px solid #4c4c4c; line-height: 22px; font-size: 15px; color: #707474; }

	.band { height: 24px; background: #3b3b3b; }
	.ruler { position: relative; height: 79px; overflow: hidden; }
	.ruler svg { width: 100%; height: 79px; stroke: #787878; fill: none; }
	.ruler .dim { stroke: #5a5a5a; }
	.ruler .start { fill: #3a8c80; stroke: none; }
	.tempo { position: absolute; top: 2px; padding-left: 4px; font: 13px/16px "Open Sans", sans-serif; color: #b4b4b4; }
	.mark { position: absolute; top: 26px; padding-left: 6px; font: 17px/21px "Open Sans", sans-serif; color: #787878; }
	.mark small { display: table; border-top: 1px solid #787878; font-size: 13px; line-height: 20px; }
	.view { display: flex; height: 887px; }
	.canvas { position: relative; flex: 1; background: #454545; }
	.canvas svg { width: 100%; height: 100%; }
	.g1 { stroke: rgba(0, 0, 0, 0.75); stroke-dasharray: 1 2; }
	.g2 { stroke: rgba(0, 0, 0, 0.35); stroke-dasharray: 1 2; }
	.itemname { position: absolute; left: 2px; top: 220px; font: 14px/20px "Open Sans", sans-serif; color: #8e8e8e; }
	.vscroll { display: flex; flex-direction: column; align-items: center; width: 25px; padding: 4px 1px 0 0; }
	.vscroll .bar { width: 17px; flex: 1; margin: 9px 0; border-radius: 6px; background: linear-gradient(#222, #222) center / 11px 2px no-repeat, #585858; }
	.arrow { flex: none; width: 18px; height: 18px; border-radius: 50%; background: #111; }
	.arrow svg { fill: #aaa; }
	.zoom { width: 20px; height: 30px; font: bold 26px/30px "Open Sans", sans-serif; color: #aaa; }
	.hscroll { display: flex; align-items: center; height: 24px; padding-left: 3px; }
	.arrange .hscroll { padding-right: 30px; }
	.hscroll .bar {
		position: relative;
		display: flex;
		align-items: center;
		justify-content: space-between;
		flex: 2240;
		height: 16px;
		margin-left: 10px;
		padding: 0 4px;
		border-radius: 5px;
		background: #585858;
	}
	.bar i { width: 8px; height: 8px; border-radius: 50%; background: #222; }
	.bar u { position: absolute; width: 2px; height: 11px; background: #222; }
	.hscroll .rest { flex: 780; }
	.hscroll .zoom { margin-left: 10px; line-height: 20px; height: 24px; }

	.mixer { display: grid; grid-template-columns: 187px 1fr; padding-top: 10px; }
	.insert, .send { height: 22px; margin: 0 4px 2px 1px; overflow: hidden; white-space: nowrap; line-height: 22px; font-size: 14px; color: #c4c4c4; }
	.insert { padding: 0 5px; text-align: center; background: #2f2f2f; }
	.insert.used { background: #262626; }
	.send { position: relative; padding-left: 5px; border: 1px solid #262626; border-radius: 0 11px 11px 0; background: #262626; line-height: 20px; }
	.fill { position: absolute; inset: 0 auto 0 0; background: #474747; }
	.send u { position: absolute; top: 0; bottom: 0; left: 88px; width: 1px; background: #4c4c4c; }
	.send span { position: absolute; left: 5px; }
	.send svg { position: absolute; right: 6px; top: 2px; width: 12px; height: 16px; fill: none; stroke: #aaa; stroke-width: 3; }
	.send.none { border-color: #2f2f2f; background: radial-gradient(circle at calc(100% - 13px) 15px, #444 2px, #2f2f2f 3px); }
	hr { height: 1px; margin: 0 26px 11px 22px; border: none; background: #4c4c4c; }
	hr.first { margin: -2px 26px 5px 22px; }
	.inserts { height: 336px; }
	.fxbtn {
		display: block;
		width: calc(100% - 21px);
		height: 27px;
		margin: 0 0 10px 10px;
		padding: 1px 2px 2px;
		background: #141414;
		clip-path: polygon(8px 0, 100% 0, 100% 100%, 0 100%, 0 10px);
		font: 15px Roboto, sans-serif;
	}
	.fxbtn span {
		position: relative;
		display: flex;
		height: 24px;
		line-height: 25px;
		background: #424242;
		clip-path: polygon(7px 0, 100% 0, 100% 100%, 0 100%, 0 9px);
		text-align: left;
	}
	.fxbtn span::before { content: ""; position: absolute; top: 0; left: 27%; right: 18%; height: 3px; background: #303030; }
	.fxbtn b { flex: 3; padding-left: 10px; font-weight: 500; color: #8c9494; }
	.fxbtn em { flex: 2; display: flex; align-items: center; justify-content: flex-end; padding-right: 10px; background: #727e7e; }
	.fxbtn.on span { background: #2b5646; }
	.fxbtn.on span::before { background: #05d488; }
	.fxbtn.on b { color: #d4dcd8; }
	.fxbtn .power { stroke: #3c4444; }
	.fxbtn.on .power { stroke: #1ad49c; }
	.wide .fxbtn span::before { left: 6%; right: 4%; }
	.wide .fxbtn b { flex: 4; }
	.master .fxbtn b { flex: 6; }

	.strips { min-width: 0; background: #2a2a2a; overflow: hidden; }
	.row { display: flex; height: 852px; }
	.strip { flex: none; width: 129px; background: linear-gradient(#333 385px, #282828 385px); }
	.strip.wide { width: 501px; }
	.head {
		position: relative;
		display: flex;
		flex-direction: column;
		align-items: center;
		height: 107px;
		padding-top: 11px;
		border-top: 1px solid #000;
		border-right: 1px solid #111;
		background: var(--c);
	}
	.pan { margin: 6px 0 5px; font-size: 14px; line-height: 21px; color: #1c1c1c; }
	.head .in { align-self: stretch; width: auto; height: 24px; margin: 0 58px 0 8px; }
	.notch { position: absolute; right: 0; bottom: 0; width: 62px; height: 36px; fill: #282828; }
	.head .rec { position: absolute; right: 12px; bottom: -7px; width: 34px; height: 34px; border-width: 2px; }
	.head .rec i { width: 18px; height: 18px; }
	.body { display: flex; height: 272px; border-right: 1px solid #111; }
	.left { flex: 1; display: flex; flex-direction: column; min-width: 0; }
	.vol { height: 34px; padding-top: 10px; text-align: center; line-height: 22px; font-size: 15px; color: #6c6c6c; }
	.lanes { display: flex; flex: 1; }
	.scale { flex: 1; text-align: center; font: 13px Roboto, sans-serif; color: #6a6a6a; }
	.scale b { display: block; height: 22px; line-height: 20px; font-weight: 500; color: #8a8a8a; }
	.scale span { display: block; height: 41px; line-height: 41px; }
	.fader {
		appearance: none;
		writing-mode: vertical-lr;
		direction: rtl;
		width: 31px;
		height: 193px;
		margin: 20px 0 0;
		background: linear-gradient(#0e0e0e, #0e0e0e) center / 3px 100% no-repeat, linear-gradient(#555, #555) center 60px / 28px 1px no-repeat;
	}
	.fader::-webkit-slider-thumb {
		appearance: none;
		width: 31px;
		height: 62px;
		border: 1px solid #111;
		border-radius: 3px;
		background: linear-gradient(#555, #aaa 8%, #ddd 16%, #555 17%, #4c4c4c 46%, #111 48% 51%, #555 52%, #e4e4e4 80%, #444 82%, #707070);
		box-shadow: 0 5px 0 rgba(20, 20, 20, 0.7);
	}
	.hmeter { position: relative; flex: 1; font-size: 17px; color: #f24a10; }
	.hmeter svg { width: 100%; height: 234px; fill: none; }
	.hmeter span { position: absolute; top: 107px; line-height: 20px; transform: translateX(-50%); }
	.hmeter .clip { left: 94%; color: #6c6c6c; font-size: 16px; }
	.right { display: flex; flex-direction: column; align-items: center; width: 58px; }
	.strip .speaker { margin: 13px 0 8px; }
	.strip .sq { margin-bottom: 4px; flex: none; }
	.routebtn { margin-top: 4px; font: 15px/18px Roboto, sans-serif; color: #7a7a7a; }
	.route { width: 32px; height: 30px; margin: 0 auto; }
	.route .edge { fill: #3a3a3a; stroke: #141414; stroke-width: 2; }
	.strip .phase { margin: 33px 0 6px; }
	.trimbtn { font: 15px/20px Roboto, sans-serif; color: #6c6c6c; }
	.trimbtn i { display: block; width: 32px; height: 30px; padding: 10px 6px 0; background: #4c5252; border: 1px solid #181818; clip-path: polygon(8px 0, 100% 0, 100% 100%, 0 100%, 0 10px); --e: #232626; }
	.name { height: 58px; padding: 12px 3px 0; border-right: 1px solid #111; font-size: 18px; line-height: 24px; color: var(--n); }
	.name span { display: block; overflow: hidden; text-align: center; white-space: nowrap; }
	.num { position: relative; height: 30px; border-right: 1px solid #222; background: var(--c); text-align: center; line-height: 31px; font-size: 18px; color: var(--d); }
	.num svg { position: absolute; left: 6px; top: 7px; width: 14px; height: 17px; fill: rgba(0, 0, 60, 0.2); }
	.child .name { height: 36px; padding-top: 1px; }
	.strips .hscroll { height: 26px; background: #333; }
	.strips .hscroll .bar { flex: 3512; }
	.strips .hscroll .rest { flex: 86; }

	.master .insert, .master .send { margin-left: 0; margin-right: 3px; }
	.master .inserts { height: 356px; }
	.master hr.first { margin: 9px 26px 5px 22px; }
	.master .fxbtn { margin-bottom: 0; }
	.mhead { display: flex; justify-content: space-between; height: 73px; padding: 13px 8px 0 38px; }
	.mhead div { display: flex; flex-direction: column; align-items: center; gap: 5px; font-size: 15px; line-height: 22px; }
	.mhead div + div { font: 15px/22px Roboto, sans-serif; }
	.mbody { display: flex; height: 380px; background: #282828; border-right: 1px solid #222; }
	.mleft { flex: 1; }
	.mbody .vol { padding-left: 28px; }
	.mbody .fader { height: 301px; margin-top: 55px; background: linear-gradient(#0e0e0e, #0e0e0e) center / 3px 100% no-repeat; }
	.peaks { display: flex; justify-content: space-around; padding: 5px 8px 0; font: 500 14px/20px Roboto, sans-serif; color: #c8c8c8; }
	.peaks b { font-weight: 500; }
	.peaks.low { color: #fff; padding-top: 0; }
	.cols { display: flex; justify-content: space-between; height: 291px; padding: 0 8px 0 4px; font: 14px/29px Roboto, sans-serif; color: #6a6a6a; }
	.cols span { display: block; height: 29px; }
	.cols .mid { padding-top: 20px; }
	.end { text-align: right; }
	.mbody .right { width: 46px; margin-right: 6px; padding-top: 9px; }
	.mbody .sq { margin-bottom: 6px; }
	.mbody .trimbtn { margin-top: auto; margin-bottom: 10px; }
	.mfoot { display: flex; align-items: center; height: 29px; font-size: 18px; color: #a4a8a8; }
	.mfoot svg { width: 24px; height: 24px; margin: 0 47px 0 1px; fill: none; stroke: #888; stroke-width: 1.500; }
	.mfoot path { fill: #888; stroke: none; }

	footer { display: flex; height: 25px; padding-left: 2px; background: #3a3a3a; border-bottom: 3px solid #28281f; color: #eee; line-height: 20px; }
	.tab { width: 90px; height: 22px; margin-left: 2px; background: #7f8a8a; clip-path: polygon(0 0, 100% 0, 90% 100%, 10% 100%); color: #111; font: bold 15px/20px "Open Sans", sans-serif; }
	.tab i { display: inline-block; width: 14px; height: 14px; margin-right: 5px; border: 1px solid #222; font: 12px/11px "Open Sans", sans-serif; }
</style>
